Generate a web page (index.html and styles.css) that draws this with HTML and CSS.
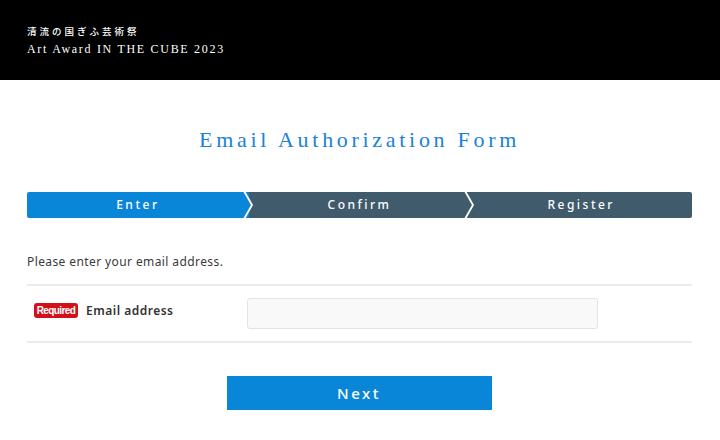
FILE: index.html
```html
<!DOCTYPE html>
<html lang="ja">
<head>
<meta charset="utf-8">
<title>Email Authorization Form</title>
<link rel="stylesheet" href="styles.css">
</head>
<body>
<header class="site-header">
  <p class="brand-ja">清流の国ぎふ芸術祭</p>
  <p class="brand-en">Art Award IN THE CUBE 2023</p>
</header>
<main class="content">
  <h1 class="page-title">Email Authorization Form</h1>
  <ol class="steps">
    <li class="step step-active">Enter<svg class="chevron" viewBox="0 0 10 26" width="10" height="26"><polygon points="0,0 8,13 0,26" fill="#0a86d9"/><polyline points="0,-1 8,13 0,27" fill="none" stroke="#fff" stroke-width="1.8"/></svg></li>
    <li class="step">Confirm<svg class="chevron" viewBox="0 0 10 26" width="10" height="26"><polygon points="0,0 8,13 0,26" fill="#405b6c"/><polyline points="0,-1 8,13 0,27" fill="none" stroke="#fff" stroke-width="1.8"/></svg></li>
    <li class="step">Register</li>
  </ol>
  <p class="lead">Please enter your email address.</p>
  <div class="form-table">
    <div class="form-row">
      <div class="form-label"><span class="badge">Required</span><span class="label-text">Email address</span></div>
      <div class="form-field"><input class="text-input" type="email" aria-label="Email address"></div>
    </div>
  </div>
  <div class="actions">
    <button class="btn-next" type="button">Next</button>
  </div>
</main>
</body>
</html>
```
FILE: styles.css
```css
* { box-sizing: border-box; }
html, body { margin: 0; padding: 0; background: #fff; }
body { font-family: "Noto Sans", "Open Sans", sans-serif; color: #333; }

.site-header {
  background: #000;
  height: 80px;
  padding: 24px 27px 0;
}
.brand-ja {
  margin: 0;
  color: #fff;
  font-family: "Noto Sans CJK JP", sans-serif;
  font-weight: 500;
  font-size: 9.5px;
  line-height: 14px;
  letter-spacing: 3px;
}
.brand-en {
  margin: 3px 0 0;
  color: #fff;
  font-family: "Liberation Serif", serif;
  font-size: 12px;
  line-height: 16px;
  letter-spacing: 1.7px;
}

.content { padding: 0 28px 0 27px; }

.page-title {
  margin: 0;
  padding-top: 45px;
  height: 112px;
  text-align: center;
  font-family: "Liberation Serif", serif;
  font-weight: normal;
  font-size: 22px;
  line-height: 30px;
  letter-spacing: 3.7px;
  color: #1a82d6;
}

.steps {
  display: flex;
  list-style: none;
  margin: 0;
  padding: 0;
  height: 26px;
}
.step {
  position: relative;
  flex: 1;
  background: #405b6c;
  color: #fff;
  text-align: center;
  font-size: 12px;
  font-weight: 500;
  line-height: 26px;
  letter-spacing: 2.5px;
}
.step:first-child { border-radius: 2px 0 0 2px; }
.step:last-child { border-radius: 0 2px 2px 0; }
.step-active { background: #0a86d9; }
.chevron {
  position: absolute;
  top: 0;
  right: -5px;
  z-index: 1;
  overflow: visible;
}

.lead {
  margin: 0;
  padding-top: 36px;
  height: 66px;
  font-size: 12px;
  line-height: 16px;
  letter-spacing: 0.4px;
  color: #3a3a3a;
}

.form-table {
  border-top: 2px solid #ebebeb;
  border-bottom: 2px solid #ebebeb;
}
.form-row {
  display: flex;
  align-items: center;
  height: 55px;
}
.form-label {
  display: flex;
  align-items: center;
  width: 220px;
  padding-left: 7px;
  padding-bottom: 7px;
}
.badge {
  display: inline-block;
  background: #d3101a;
  color: #fff;
  font-family: "Liberation Sans", sans-serif;
  font-weight: bold;
  font-size: 10px;
  line-height: 15px;
  height: 15px;
  width: 44px;
  text-align: center;
  border-radius: 3px;
  letter-spacing: -0.6px;
}
.label-text {
  margin-left: 8px;
  font-size: 12px;
  font-weight: 600;
  letter-spacing: 0.5px;
  color: #333;
}
.form-field { flex: 1; }
.text-input {
  display: block;
  width: 351px;
  height: 31px;
  background: #f9f9f9;
  border: 1px solid #e3e3e3;
  border-radius: 3px;
  margin: 0;
  padding: 0 8px;
}

.actions {
  display: flex;
  justify-content: center;
  padding-top: 33px;
}
.btn-next {
  width: 265px;
  height: 34px;
  border: none;
  border-radius: 0;
  background: #0a86d9;
  color: #fff;
  font-family: "Noto Sans", sans-serif;
  font-size: 15px;
  font-weight: 500;
  letter-spacing: 2.5px;
  margin-left: -1px;
}
```
